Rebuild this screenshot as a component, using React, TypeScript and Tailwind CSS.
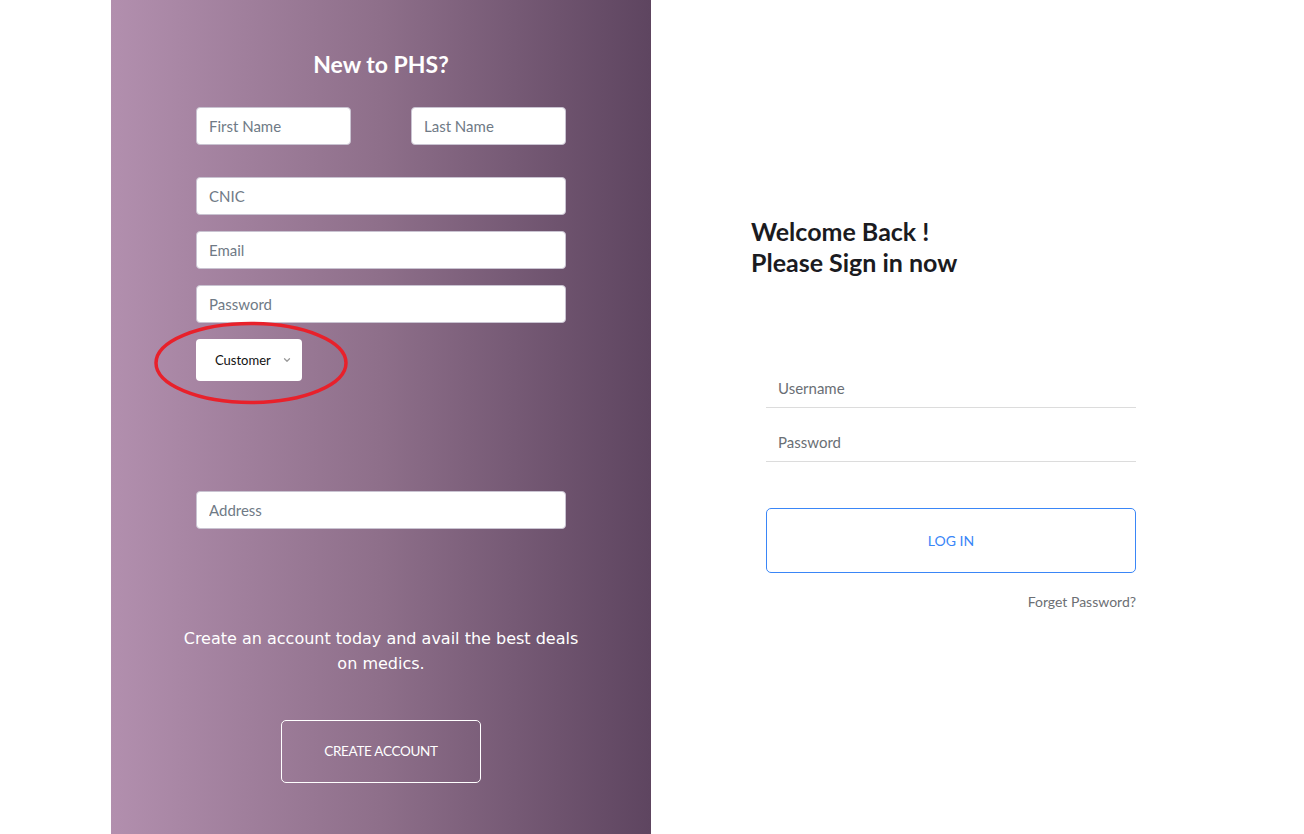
import { ChevronDown } from "lucide-react";

const field =
  "w-full h-[38px] bg-white rounded-[4px] border border-[#c9c3d1] px-[12px] text-[15px] text-[#495057] placeholder:text-[#6f7a86] outline-none";

export default function App() {
  return (
    <div className="flex min-h-[834px] w-[1304px] bg-white font-['Lato',sans-serif]">
      {/* sign up side */}
      <div className="relative ml-[111px] w-[540px] min-h-[834px] bg-gradient-to-r from-[#b28fae] via-[#8e6f8a] to-[#5e4560] flex flex-col items-center">
        <h2 className="mt-[49px] text-[23px] leading-[30px] font-bold text-white">New to PHS?</h2>

        <div className="mt-[28px] w-[370px] flex flex-col">
          <div className="flex justify-between">
            <input className={field + " !w-[155px]"} placeholder="First Name" />
            <input className={field + " !w-[155px]"} placeholder="Last Name" />
          </div>
          <input className={field + " mt-[32px]"} placeholder="CNIC" />
          <input className={field + " mt-[16px]"} placeholder="Email" />
          <input className={field + " mt-[16px]"} placeholder="Password" type="password" />
          <div className="mt-[16px] w-[106px] h-[42px] bg-white rounded-[4px] flex items-center pl-[19px] pr-[8px] gap-[11px]">
            <span className="text-[13px] text-[#111] leading-none">Customer</span>
            <ChevronDown className="w-[10px] h-[10px] text-[#999]" strokeWidth={3} />
          </div>
          <input className={field + " mt-[110px]"} placeholder="Address" />
        </div>

        <p className="mt-[97px] w-[400px] text-center text-[16px] leading-[25px] text-white font-['DejaVu_Sans',sans-serif]">
          Create an account today and avail the best deals on medics.
        </p>

        <button className="mt-[44px] w-[200px] h-[63px] rounded-[5px] border border-white text-white text-[13.5px] tracking-[-0.3px]">
          CREATE ACCOUNT
        </button>

        {/* red annotation ring */}
        <svg
          className="absolute left-[42px] top-[320px] pointer-events-none"
          width="196"
          height="86"
          viewBox="0 0 196 86"
        >
          <ellipse cx="98" cy="43" rx="95" ry="39.5" fill="none" stroke="#e8212b" strokeWidth="3.5" />
        </svg>
      </div>

      {/* sign in side */}
      <div className="flex-1 pl-[100px] flex flex-col">
        <h1 className="mt-[216px] text-[25px] leading-[31px] font-bold text-[#1b1b1f]">
          Welcome Back !
          <br />
          Please Sign in now
        </h1>

        <div className="ml-[15px] w-[370px] mt-[90px] flex flex-col">
          <input
            className="h-[40px] border-b border-[#dcdcdc] px-[12px] text-[15px] placeholder:text-[#6a6f75] outline-none"
            placeholder="Username"
          />
          <input
            type="password"
            className="mt-[14px] h-[40px] border-b border-[#dcdcdc] px-[12px] text-[15px] placeholder:text-[#6a6f75] outline-none"
            placeholder="Password"
          />
          <button className="mt-[46px] h-[65px] rounded-[5px] border border-[#3a86f7] text-[#3a86f7] text-[14px]">
            LOG IN
          </button>
          <a className="mt-[19px] self-end text-[14px] leading-[20px] text-[#6c6f74]">Forget Password?</a>
        </div>
      </div>
    </div>
  );
}
